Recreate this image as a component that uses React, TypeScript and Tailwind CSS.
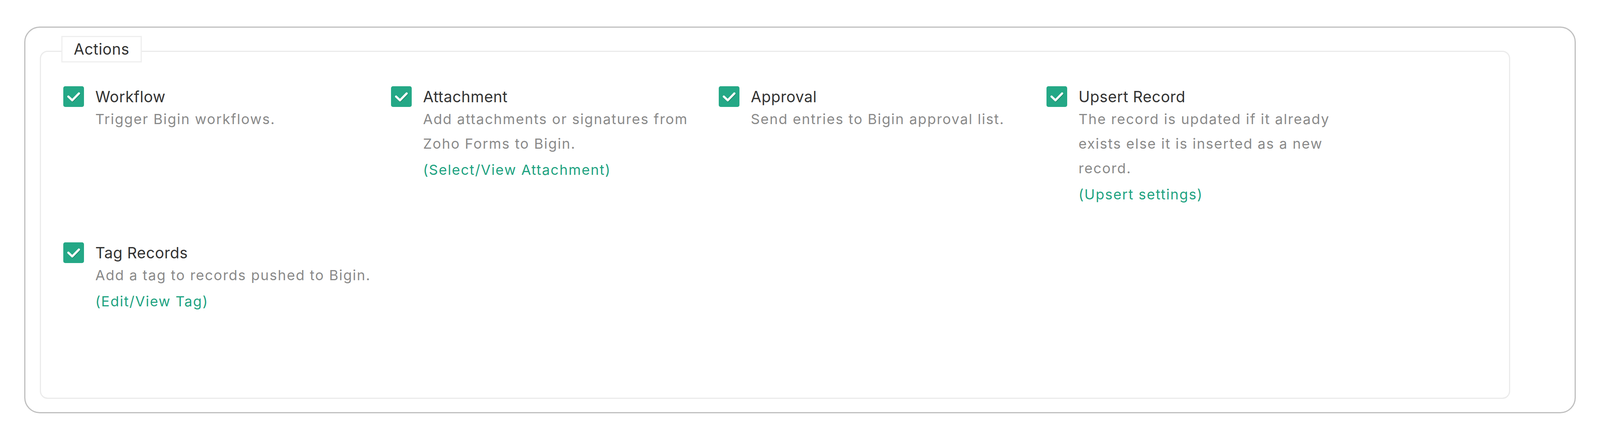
import React from 'react';

interface Action {
  title: string;
  description: string;
  link?: string;
}

const actions: Action[] = [
  { title: 'Workflow', description: 'Trigger Bigin workflows.' },
  {
    title: 'Attachment',
    description: 'Add attachments or signatures from Zoho Forms to Bigin.',
    link: '(Select/View Attachment)',
  },
  { title: 'Approval', description: 'Send entries to Bigin approval list.' },
  {
    title: 'Upsert Record',
    description: 'The record is updated if it already exists else it is inserted as a new record.',
    link: '(Upsert settings)',
  },
  {
    title: 'Tag Records',
    description: 'Add a tag to records pushed to Bigin.',
    link: '(Edit/View Tag)',
  },
];

function CheckBox() {
  return (
    <span className="shrink-0 w-[53px] h-[53px] rounded-[5px] bg-[#24a886] flex items-center justify-center">
      <svg width="53" height="53" viewBox="0 0 53 53" fill="none">
        <path d="M14 28l10 9.5L41 20" stroke="#15684f" strokeOpacity="0.55" strokeWidth="5.5" strokeLinecap="round" strokeLinejoin="round" />
        <path d="M13 26.5l10 9.5L40 18.5" stroke="#ffffff" strokeWidth="5.5" strokeLinecap="round" strokeLinejoin="round" />
      </svg>
    </span>
  );
}

function ActionItem({ action }: { action: Action }) {
  return (
    <div className="flex gap-[29px]">
      <CheckBox />
      <div className="w-[740px]">
        <div className="text-[39px] leading-[53px] tracking-[0.015em] text-[#333333]">{action.title}</div>
        <p className="text-[36px] leading-[63px] tracking-[0.055em] text-[#8a8a8a]">{action.description}</p>
        {action.link && (
          <a className="block mt-[4px] text-[36px] leading-[63px] tracking-[0.055em] text-[#1fa382] cursor-pointer">
            {action.link}
          </a>
        )}
      </div>
    </div>
  );
}

export default function App() {
  return (
    <div className="min-h-screen bg-white pt-[68px] font-['Inter','Noto_Sans',sans-serif]">
      <div className="mx-[62px] border-[3px] border-[#bfbfbf] rounded-[40px] pt-[59px] pb-[34px] pl-[37px] pr-[165px]">
        <div className="relative h-[892px] border-[3px] border-[#ebebeb] rounded-[20px] pt-[88px] pl-[57px]">
          <div className="absolute left-[52px] -top-[41px] w-[206px] h-[68px] border-[3px] border-[#efefef] bg-white flex items-center justify-center text-[39px] tracking-[0.015em] text-[#333333]">
            Actions
          </div>
          <div className="grid grid-cols-[repeat(4,839px)] gap-y-[91px]">
            {actions.map((a) => (
              <ActionItem key={a.title} action={a} />
            ))}
          </div>
        </div>
      </div>
    </div>
  );
}
